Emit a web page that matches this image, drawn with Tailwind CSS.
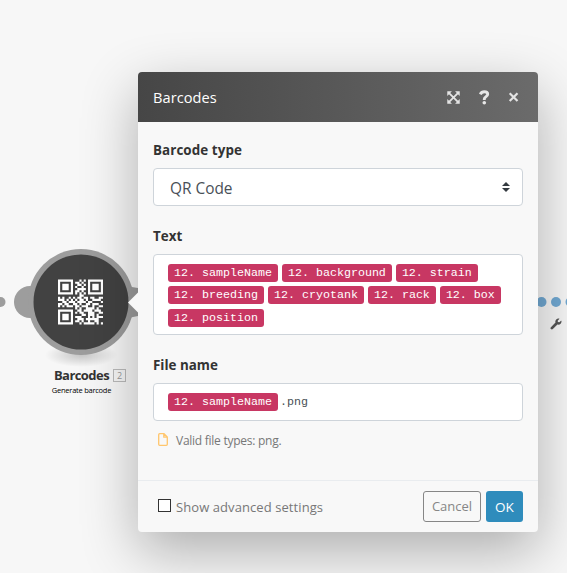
<!DOCTYPE html>
<html lang="en">
<head>
<meta charset="utf-8">
<title>Barcodes</title>
<script src="https://cdn.jsdelivr.net/npm/@tailwindcss/browser@4"></script>
</head>
<body class="relative w-[567px] h-[573px] overflow-hidden bg-[#f7f7f7] font-['Open_Sans','Noto_Sans',sans-serif] text-[#333]">
<!-- scenario canvas -->
<svg class="absolute inset-0" width="567" height="573" viewBox="0 0 567 573">
  <defs><radialGradient id="s"><stop offset="0" stop-color="#000" stop-opacity=".2"/><stop offset="1" stop-color="#000" stop-opacity="0"/></radialGradient></defs>
  <ellipse cx="81" cy="355" rx="36" ry="12" fill="url(#s)"/>
  <g fill="#9d9d9d"><circle cx="0.5" cy="302" r="5"/><circle cx="30" cy="302" r="16"/><circle cx="81" cy="302" r="53"/><path d="M124 284q6 3 14 4v28q-8 1-14 4z"/></g>
  <circle cx="81" cy="302" r="47.5" fill="#424242"/>
  <path id="qr" fill="#fff" transform="translate(58 279.5) scale(2.143)"/>
  <g fill="#71a9d3"><circle cx="541.5" cy="302" r="5"/><circle cx="556" cy="302" r="5"/><circle cx="570.5" cy="302" r="5"/></g>
  <path transform="translate(550.5 318.5) scale(.0215)" fill="#555" d="M507.700 109.100c-2.200-9-13.500-12.100-20.100-5.500l-74.400 74.400-67.900-11.300L334 98.900l74.400-74.400c6.600-6.600 3.400-17.900-5.700-20.200-47.400-11.700-99.600.9-136.600 37.900-39.600 39.600-50.500 97.100-34.100 147.200L18.700 402.800c-25 25-25 65.500 0 90.500s65.500 25 90.500 0l213.200-213.200c50.100 16.700 107.500 5.700 147.400-34.200 37.100-37.100 49.700-89.300 37.900-136.800z"/>
</svg>
<div class="absolute left-0 top-[367px] w-[163px] text-center">
  <div class="text-[13px] leading-4 font-bold tracking-[-0.55px]">Barcodes</div>
  <div class="text-[7.5px] leading-[14px] tracking-[-0.25px] text-black">Generate barcode</div>
</div>
<div class="absolute left-[113px] top-[369px] w-[13px] h-[13px] border border-[#bbb] text-[9px] leading-[11px] text-center text-[#999]">2</div>

<!-- settings panel -->
<main class="absolute left-[138px] top-[72px] w-[400px] h-[460px] rounded bg-[#f8f8f8] flex flex-col shadow-[0_19px_56px_rgba(0,0,0,0.3)]">
  <header class="h-[50px] shrink-0 rounded-t bg-linear-to-r from-[#464646] to-[#6b6b6b] pl-[15px] pr-[19px] flex items-center text-white">
    <h1 class="text-[14.6px] tracking-[0.05px] grow pt-px">Barcodes</h1>
    <svg class="mr-[19px]" width="13" height="13" viewBox="0 0 14 14" fill="#e4e4e4" stroke="#e4e4e4"><path stroke="none" d="M.3.3h5l-5 5zM13.700.3v5l-5-5zM.3 13.700v-5l5 5zM13.700 13.700h-5l5-5z"/><path stroke-width="1.900" d="M2 2l10 10M12 2L2 12"/></svg>
    <svg class="mr-[18px]" width="11" height="15" viewBox="0 0 11 15" fill="none" stroke="#e8e8e8"><path stroke-width="2.900" d="M1.300 4.300C2.200 2.500 3.500 1.800 5.300 1.800c2 0 3.400 1 3.400 2.500 0 2.400-3.400 2.200-3.400 4.800V10"/><circle cx="5.300" cy="12.700" r="1.800" fill="#e8e8e8" stroke="none"/></svg>
    <svg width="11" height="11" viewBox="0 0 11 11" stroke="#e4e4e4" stroke-width="2.200"><path d="M1.700 1.200l7.800 7.800M9.500 1.200L1.700 9"/></svg>
  </header>
  <section class="grow px-[15px] pt-[18px]">
    <label class="block text-[13.4px] leading-5 font-bold tracking-[0.08px]">Barcode type</label>
    <div class="mt-2 h-[38px] rounded border border-[#ced4da] bg-white pl-4 pr-3 flex items-center justify-between text-[#495057]">
      <span class="text-[15.4px] pt-[4px]">QR Code</span>
      <svg width="8" height="10" viewBox="0 0 8 10" fill="#343a40"><path d="M4 0l4 4H0zM4 10l4-4H0z"/></svg>
    </div>
    <label class="block mt-5 text-[13.4px] leading-5 font-bold">Text</label>
    <div class="mt-2 h-[81px] rounded border border-[#ced4da] bg-white pl-[14px] pt-[9px] flex flex-col gap-[4.400px] font-['Liberation_Mono',monospace] text-[11.67px] leading-[18px] text-white whitespace-pre">
      <div class="flex gap-1"><span class="h-[18px] px-[6px] rounded-[3px] bg-[#c83763]">12. sampleName</span><span class="h-[18px] px-[6px] rounded-[3px] bg-[#c83763]">12. background</span><span class="h-[18px] px-[6px] rounded-[3px] bg-[#c83763]">12. strain</span></div>
      <div class="flex gap-1"><span class="h-[18px] px-[6px] rounded-[3px] bg-[#c83763]">12. breeding</span><span class="h-[18px] px-[6px] rounded-[3px] bg-[#c83763]">12. cryotank</span><span class="h-[18px] px-[6px] rounded-[3px] bg-[#c83763]">12. rack</span><span class="h-[18px] px-[6px] rounded-[3px] bg-[#c83763]">12. box</span></div>
      <div class="flex gap-1"><span class="h-[18px] px-[6px] rounded-[3px] bg-[#c83763]">12. position</span></div>
    </div>
    <label class="block mt-5 text-[13.4px] leading-5 font-bold">File name</label>
    <div class="mt-2 h-[38px] rounded border border-[#ced4da] bg-white pl-[14px] pt-[9px] flex gap-[2px] font-['Liberation_Mono',monospace] text-[11.67px] leading-[18px] text-[#495057] whitespace-pre">
      <span class="h-[18px] px-[6px] rounded-[3px] bg-[#c83763] text-white">12. sampleName</span><span>.png</span>
    </div>
    <div class="mt-[10px] pl-[5px] flex items-center text-[12px] leading-5 text-[#777]">
      <svg class="mr-2 -mt-1" width="10" height="13" viewBox="0 0 10 13" fill="none" stroke="#ffc66d" stroke-width="1.300"><path d="M1.700.7H6l3.300 3.300v7.300q0 1-1 1H1.700q-1 0-1-1V1.700q0-1 1-1zM5.800.7v3.500h3.500"/></svg>
      <span class="tracking-[-0.26px]">Valid file types: png.</span>
    </div>
  </section>
  <footer class="h-[52px] shrink-0 border-t border-[#e9ecef] pl-5 pr-[15px] flex items-center text-[13px] text-[#777]">
    <span class="size-[13px] border-[1.500px] border-[#333] bg-white mr-[5px] -mt-[2px]"></span>
    <span class="grow tracking-[0.08px] pt-[2px]">Show advanced settings</span>
    <button class="w-[58px] h-[31px] rounded-[3px] border border-[#868686] text-[#868686] mr-[5px] pt-px">Cancel</button>
    <button class="w-[37px] h-[31px] rounded-[3px] bg-[#2f8cbc] text-white text-[13.5px] pt-px">OK</button>
  </footer>
</main>
<!-- pointer from the panel to its module -->
<svg class="absolute left-[128px] top-[292px]" width="11" height="21" viewBox="0 0 11 21"><path d="M0 10.500L10.500 0v21z" fill="#f8f8f8"/></svg>
<script>
const rows = [
"111111100010101111111",
"100000101101001000001",
"101110100110101011101",
"101110101001001011101",
"101110100111101011101",
"100000101101001000001",
"111111101010101111111",
"000000000011000000000",
"101001010110110110011",
"111010101011010011110",
"001101110111101100001",
"110110011010011011100",
"101011101101110010011",
"000000001010011110100",
"111111100110111101110",
"100000101011001110011",
"101110100001101110100",
"101110101110001010111",
"101110100111011111100",
"100000101101001001100",
"111111100010111110101"];
// Each horizontal run of dark cells becomes one sub-path
document.getElementById("qr").setAttribute("d", rows.map((r, y) =>
  [...r.matchAll(/1+/g)].map(m => `M${m.index} ${y}h${m[0].length}v1h-${m[0].length}z`).join("")).join(""));
</script>
</body>
</html>
